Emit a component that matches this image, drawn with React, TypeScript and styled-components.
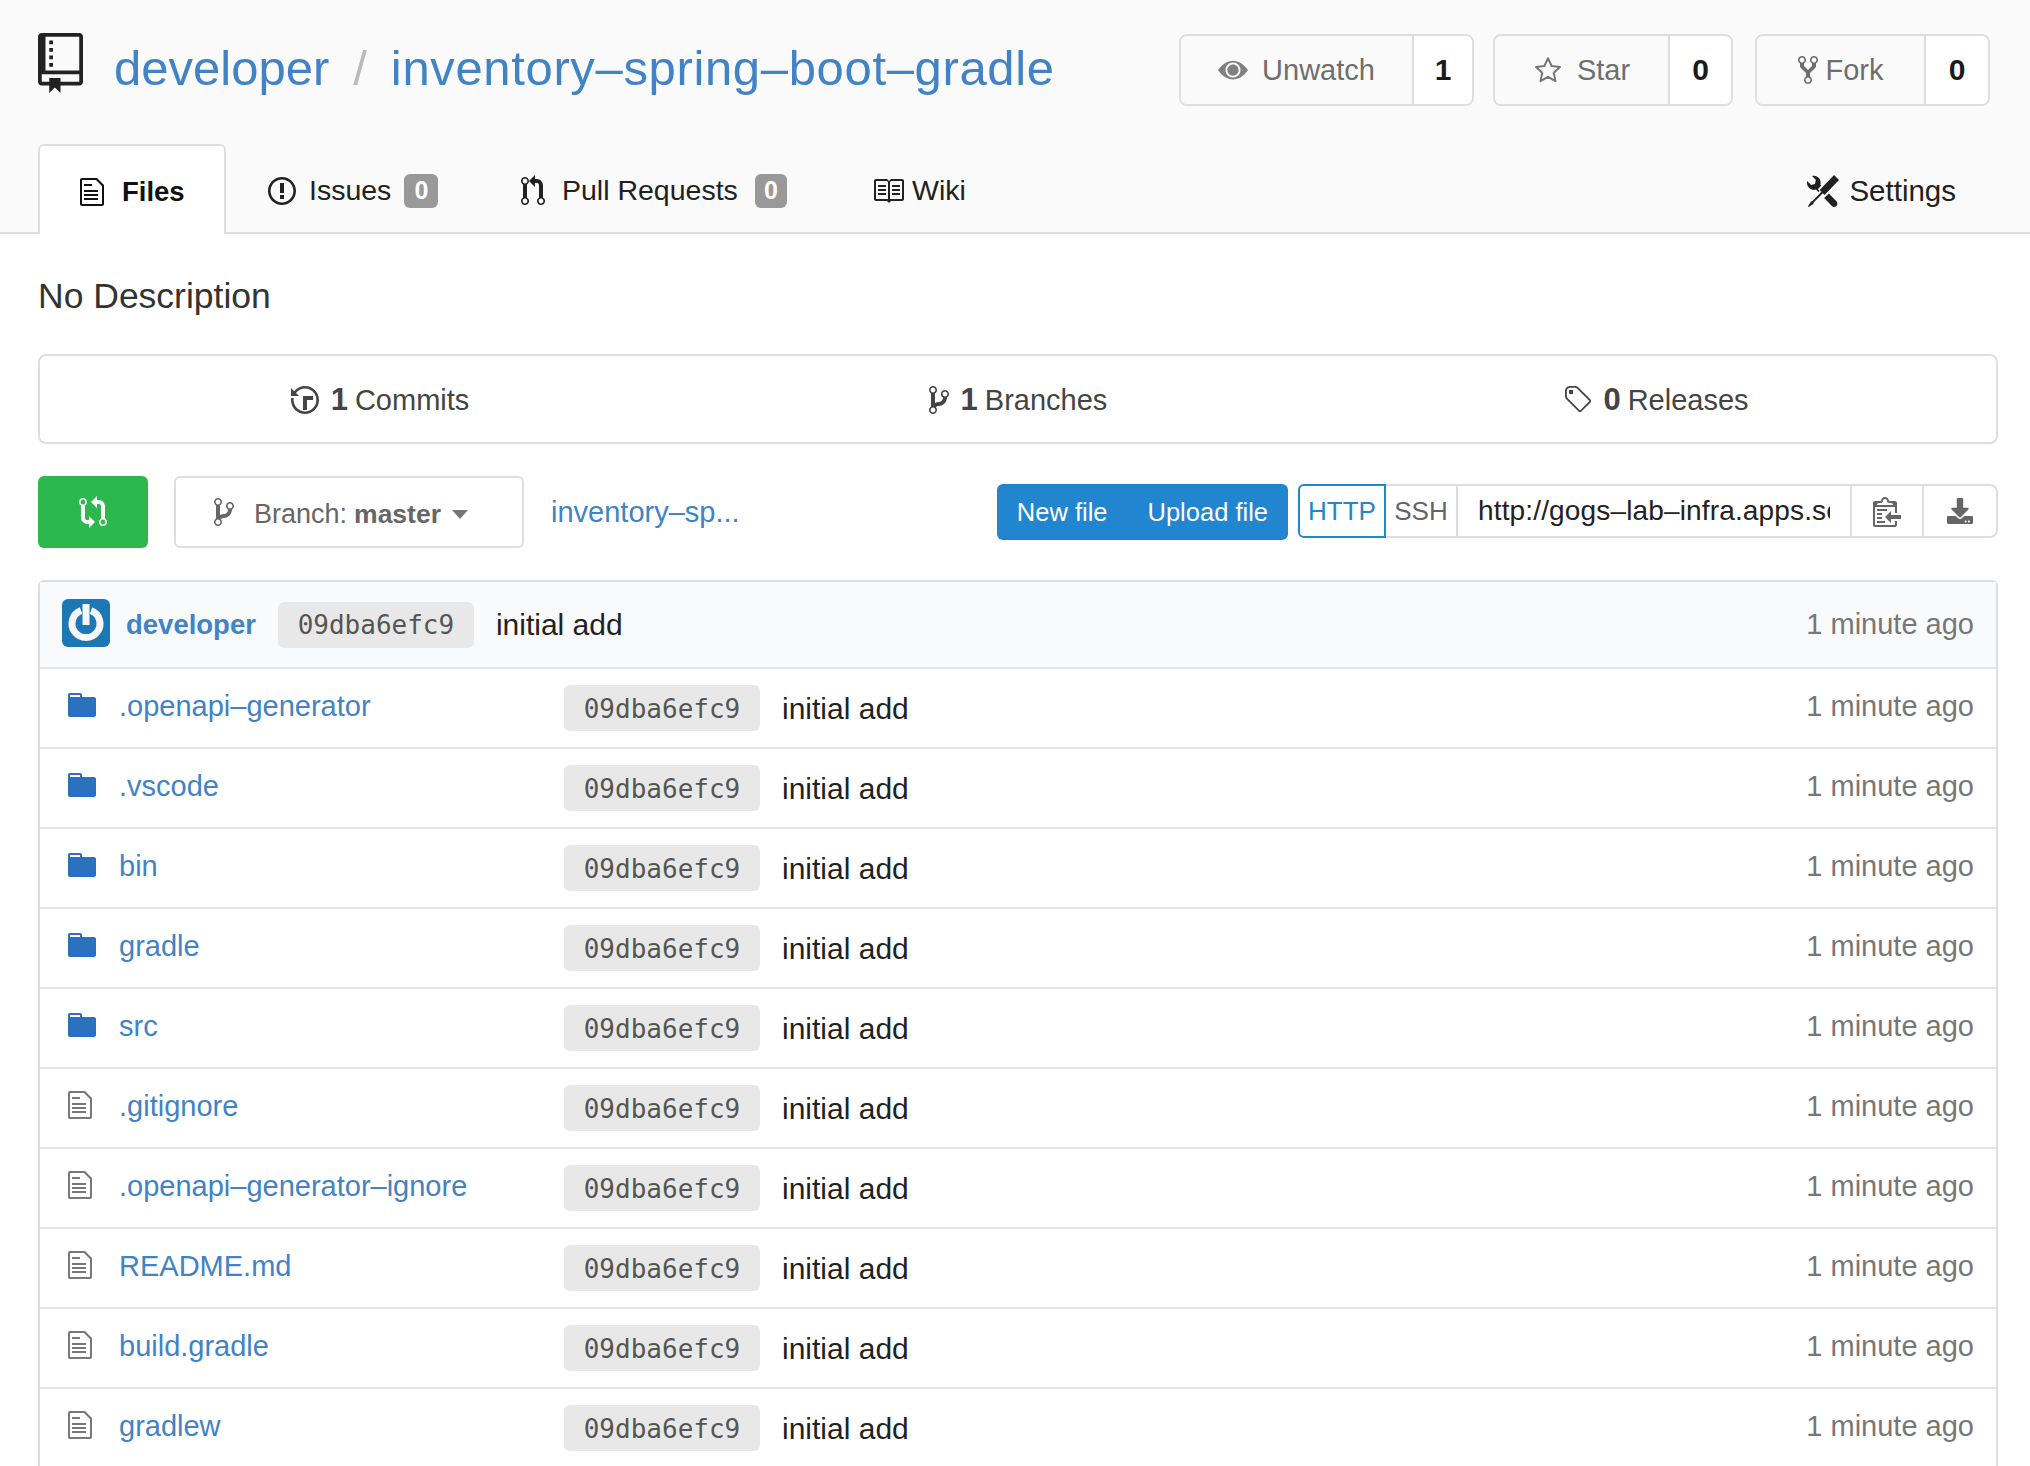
import React from 'react';
import styled, { createGlobalStyle } from 'styled-components';
import { FaDownload } from 'react-icons/fa';

const GlobalStyle = createGlobalStyle`
  html, body {
    margin: 0;
    height: 100%;
    overflow: hidden;
    background: #fff;
  }
  body {
    font-family: "Liberation Sans", Arial, sans-serif;
    font-size: 30px;
    color: rgba(0, 0, 0, 0.87);
  }
  a {
    color: #4183c4;
    text-decoration: none;
  }
`;

const ICONS: Record<string, { w: number; d: string }> = {
  repo: { w: 12, d: 'M4 9H3V8h1v1zm0-3H3v1h1V6zm0-2H3v1h1V4zm0-2H3v1h1V2zm8-1v12c0 .55-.45 1-1 1H6v2l-1.5-1.5L3 16v-2H1c-.55 0-1-.45-1-1V1c0-.55.45-1 1-1h10c.55 0 1 .45 1 1zm-1 10H1v2h2v-1h3v1h5v-2zm0-10H2v9h9V1z' },
  file: { w: 12, d: 'M6 5H2V4h4v1zM2 8h7V7H2v1zm0 2h7V9H2v1zm0 2h7v-1H2v1zm10-7.5V14c0 .55-.45 1-1 1H1c-.55 0-1-.45-1-1V2c0-.55.45-1 1-1h7.5L12 4.5zM11 5L8 2H1v12h10V5z' },
  dir: { w: 14, d: 'M13 4H7V3c0-.66-.31-1-1-1H1c-.55 0-1 .45-1 1v10c0 .55.45 1 1 1h12c.55 0 1-.45 1-1V5c0-.55-.45-1-1-1zM6 4H1V3h5v1z' },
  issue: { w: 14, d: 'M7 2.3c3.14 0 5.7 2.56 5.7 5.7s-2.56 5.7-5.7 5.7A5.71 5.71 0 0 1 1.3 8c0-3.14 2.56-5.7 5.7-5.7zM7 1C3.14 1 0 4.14 0 8s3.14 7 7 7 7-3.14 7-7-3.14-7-7-7zm1 3H6v5h2V4zm0 6H6v2h2v-2z' },
  pull: { w: 12, d: 'M11 11.28V5c-.03-.78-.34-1.47-.94-2.06C9.46 2.35 8.78 2.03 8 2H7V0L4 3l3 3V4h1c.27.02.48.11.69.31.21.2.3.42.31.69v6.28A1.993 1.993 0 0 0 10 15a1.993 1.993 0 0 0 1-3.72zm-1 2.92c-.66 0-1.2-.55-1.2-1.2 0-.65.55-1.2 1.2-1.2.65 0 1.2.55 1.2 1.2 0 .65-.55 1.2-1.2 1.2zM4 3c0-1.11-.89-2-2-2a1.993 1.993 0 0 0-1 3.72v6.56A1.993 1.993 0 0 0 2 15a1.993 1.993 0 0 0 1-3.72V4.72c.59-.34 1-.98 1-1.72zm-.8 10c0 .66-.55 1.2-1.2 1.2-.65 0-1.2-.55-1.2-1.2 0-.65.55-1.2 1.2-1.2.65 0 1.2.55 1.2 1.2zM2 4.2C1.34 4.2.8 3.65.8 3c0-.65.55-1.2 1.2-1.2.65 0 1.2.55 1.2 1.2 0 .65-.55 1.2-1.2 1.2z' },
  branch: { w: 10, d: 'M10 5c0-1.11-.89-2-2-2a1.993 1.993 0 0 0-1 3.72v.3c-.02.52-.23.98-.63 1.38-.4.4-.86.61-1.38.63-.83.02-1.48.16-2 .45V4.72a1.993 1.993 0 0 0-1-3.72C.88 1 0 1.89 0 3a2 2 0 0 0 1 1.72v6.56c-.59.35-1 .99-1 1.72 0 1.11.89 2 2 2 1.11 0 2-.89 2-2 0-.53-.2-1-.53-1.36.09-.06.48-.41.59-.47.25-.11.56-.17.94-.17 1.05-.05 1.95-.45 2.75-1.25S8.95 7.77 9 6.73h-.02C9.59 6.37 10 5.73 10 5zM2 1.8c.66 0 1.2.55 1.2 1.2 0 .65-.55 1.2-1.2 1.2C1.35 4.2.8 3.65.8 3c0-.65.55-1.2 1.2-1.2zm0 12.41c-.66 0-1.2-.55-1.2-1.2 0-.65.55-1.2 1.2-1.2.65 0 1.2.55 1.2 1.2 0 .65-.55 1.2-1.2 1.2zm6-8c-.66 0-1.2-.55-1.2-1.2 0-.65.55-1.2 1.2-1.2.65 0 1.2.55 1.2 1.2 0 .65-.55 1.2-1.2 1.2z' },
  fork: { w: 10, d: 'M8 1a1.993 1.993 0 0 0-1 3.72V6L5 8 3 6V4.72A1.993 1.993 0 0 0 2 1a1.993 1.993 0 0 0-1 3.72V6.5l3 3v1.78A1.993 1.993 0 0 0 5 15a1.993 1.993 0 0 0 1-3.72V9.5l3-3V4.72A1.993 1.993 0 0 0 8 1zM2 4.2C1.34 4.2.8 3.65.8 3c0-.65.55-1.2 1.2-1.2.65 0 1.2.55 1.2 1.2 0 .65-.55 1.2-1.2 1.2zm3 10c-.66 0-1.2-.55-1.2-1.2 0-.65.55-1.2 1.2-1.2.65 0 1.2.55 1.2 1.2 0 .65-.55 1.2-1.2 1.2zm3-10c-.66 0-1.2-.55-1.2-1.2 0-.65.55-1.2 1.2-1.2.65 0 1.2.55 1.2 1.2 0 .65-.55 1.2-1.2 1.2z' },
  eye: { w: 16, d: 'M8.06 3C3 3 0 8 0 8s3 5 8.06 5C13 13 16 8 16 8s-3-5-7.94-5zM8 12c-2.2 0-4-1.78-4-4 0-2.2 1.8-4 4-4 2.22 0 4 1.8 4 4 0 2.22-1.78 4-4 4zm3-4c0 1.66-1.34 3-3 3-1.66 0-3-1.34-3-3 0-1.66 1.34-3 3-3 1.66 0 3 1.34 3 3z' },
  tag: { w: 14, d: 'M7.73 1.73C7.26 1.26 6.62 1 5.96 1H3.5C2.13 1 1 2.13 1 3.5v2.47c0 .66.27 1.3.73 1.77l6.06 6.06c.39.39 1.02.39 1.41 0l4.59-4.59a.996.996 0 0 0 0-1.41L7.73 1.73zM2.38 7.09c-.31-.3-.47-.7-.47-1.13V3.5c0-.88.72-1.59 1.59-1.59h2.47c.42 0 .83.16 1.13.47l6.14 6.13-4.73 4.73-6.13-6.15zM3.01 3h2v2H3V3h.01z' },
  history: { w: 14, d: 'M8 13H6V6h5v2H8v5zM7 1C4.81 1 2.87 2.02 1.59 3.59L0 2v4h4L2.5 4.5C3.55 3.17 5.17 2.3 7 2.3c3.14 0 5.7 2.56 5.7 5.7s-2.56 5.7-5.7 5.7A5.71 5.71 0 0 1 1.3 8c0-.34.03-.67.09-1H.08C.03 7.33 0 7.66 0 8c0 3.86 3.14 7 7 7s7-3.14 7-7-3.14-7-7-7z' },
  book: { w: 16, d: 'M3 5h4v1H3V5zm0 3h4V7H3v1zm0 2h4V9H3v1zm11-5h-4v1h4V5zm0 2h-4v1h4V7zm0 2h-4v1h4V9zm2-6v9c0 .55-.45 1-1 1H9.5l-1 1-1-1H2c-.55 0-1-.45-1-1V3c0-.55.45-1 1-1h5.5l1 1 1-1H15c.55 0 1 .45 1 1zm-8 .5L7.5 3H2v9h6V3.5zm7-.5H9.5l-.5.5V12h6V3z' },
  tools: { w: 16, d: 'M4.48 7.27c.26.26 1.28 1.33 1.28 1.33l.56-.58-.88-.91 1.69-1.8s-.76-.74-.43-.45c.32-1.19.03-2.51-.87-3.44C4.93.5 3.66.2 2.52.51l1.93 2-.51 1.96-1.89.52-1.93-2C-.19 4.17.1 5.48 1 6.4c.94.98 2.29 1.26 3.48.87zm6.44 1.94l-2.33 2.3 3.84 3.98c.31.33.73.49 1.14.49.41 0 .82-.16 1.14-.49.63-.65.63-1.7 0-2.35l-3.79-3.93zM16 2.53L13.55 0 6.33 7.46l.88.91-4.31 4.46-.99.53-1.39 2.27.35.37 2.2-1.44.51-1.02L7.9 9.08l.88.91L16 2.53z' },
  compare: { w: 14, d: 'M5 12H4c-.27-.02-.48-.11-.69-.31-.21-.2-.3-.42-.31-.69V4.72A1.993 1.993 0 0 0 2 1a1.993 1.993 0 0 0-1 3.72V11c.03.78.34 1.47.94 2.06.6.59 1.28.91 2.06.94h1v2l3-3-3-3v2zM2 1.8c.66 0 1.2.55 1.2 1.2 0 .65-.55 1.2-1.2 1.2C1.35 4.2.8 3.65.8 3c0-.65.55-1.2 1.2-1.2zm11 9.48V5c-.03-.78-.34-1.47-.94-2.06-.6-.59-1.28-.91-2.06-.94H9V0L6 3l3 3V4h1c.27.02.48.11.69.31.21.2.3.42.31.69v6.28A1.993 1.993 0 0 0 12 15a1.993 1.993 0 0 0 1-3.72zm-1 2.92c-.66 0-1.2-.55-1.2-1.2 0-.65.55-1.2 1.2-1.2.65 0 1.2.55 1.2 1.2 0 .65-.55 1.2-1.2 1.2z' },
  clippy: { w: 14, d: 'M2 13h4v1H2v-1zm5-6H2v1h5V7zm2 3V8l-3 3 3 3v-2h5v-2H9zM4.5 9H2v1h2.5V9zM2 12h2.5v-1H2v1zm9 1h1v2c-.02.28-.11.52-.3.7-.19.18-.42.28-.7.3H1c-.55 0-1-.45-1-1V4c0-.55.45-1 1-1h3c0-1.11.89-2 2-2 1.11 0 2 .89 2 2h3c.55 0 1 .45 1 1v5h-1V6H1v9h10v-2zM2 5h8c0-.55-.45-1-1-1H8c-.55 0-1-.45-1-1s-.45-1-1-1-1 .45-1 1-.45 1-1 1H3c-.55 0-1 .45-1 1z' },
};

const Svg = styled.svg<{ $h: number; $color?: string }>`
  height: ${(p) => p.$h}px;
  width: auto;
  flex: none;
  display: block;
  fill: ${(p) => p.$color || 'currentColor'};
`;

const Octicon = ({ name, h, color }: { name: string; h: number; color?: string }) => (
  <Svg viewBox={`0 0 ${ICONS[name].w} 16`} $h={h} $color={color}>
    <path d={ICONS[name].d} />
  </Svg>
);

const StarOutline = () => (
  <Svg viewBox="0 0 24 24" $h={30} $color="none">
    <path d="M12 2.6l2.9 6.2 6.7.8-5 4.6 1.4 6.7-6-3.4-6 3.4 1.4-6.7-5-4.6 6.7-.8z" stroke="#767676" strokeWidth="1.6" strokeLinejoin="round" />
  </Svg>
);

const Page = styled.div`
  width: 2030px;
  height: 1466px;
  overflow: hidden;
`;

const Head = styled.header`
  background: #fafafa;
  border-bottom: 2px solid #dedede;
  height: 234px;
  box-sizing: border-box;
  padding: 34px 40px 0 38px;
  display: flex;
  flex-direction: column;
`;

const TitleRow = styled.div`
  display: flex;
  flex: none;
  align-items: flex-start;
  height: 110px;
`;

const Title = styled.h1`
  flex: 1;
  margin: -2px 0 0;
  display: flex;
  align-items: center;
  height: 72px;
  padding-left: 31px;
  font-size: 49px;
  font-weight: 400;
`;

const Slash = styled.span`
  color: #bbb;
  margin: 0 24px;
`;

const RepoName = styled.a`
  letter-spacing: 0.65px;
`;

const RepoIcon = styled.div`
  margin-top: -1px;
  color: #222;
`;

const Counter = styled.div<{ $ml: number }>`
  display: flex;
  height: 72px;
  box-sizing: border-box;
  border: 2px solid #dedede;
  border-radius: 8px;
  overflow: hidden;
  margin-left: ${(p) => p.$ml}px;
  font-size: 29px;
`;

const CounterLabel = styled.div<{ $w: number; $gap: number }>`
  width: ${(p) => p.$w}px;
  box-sizing: border-box;
  display: flex;
  align-items: center;
  justify-content: center;
  gap: ${(p) => p.$gap}px;
  background: #fafafa;
  color: #6e6e6e;
  border-right: 2px solid #dedede;
`;

const CounterValue = styled.div<{ $w: number }>`
  width: ${(p) => p.$w}px;
  display: flex;
  align-items: center;
  justify-content: center;
  background: #fff;
  font-weight: 700;
  font-size: 30px;
  color: #1b1b1b;
`;

const Tabs = styled.nav`
  display: flex;
  flex: none;
  height: 90px;
  align-items: stretch;
  font-size: 28.5px;
`;

const Tab = styled.div<{ $active?: boolean; $w?: number; $gap?: number; $pl?: number }>`
  display: flex;
  align-items: center;
  box-sizing: border-box;
  gap: ${(p) => p.$gap ?? 14}px;
  padding-top: 3px;
  padding-left: ${(p) => p.$pl ?? 0}px;
  width: ${(p) => (p.$w ? `${p.$w}px` : 'auto')};
  color: #212121;
  ${(p) =>
    p.$active &&
    `
    background: #fff;
    border: 2px solid #dedede;
    border-bottom: none;
    border-radius: 6px 6px 0 0;
    color: #111;
    font-weight: 700;
    font-size: 27.5px;
  `}
`;

const SettingsTab = styled(Tab)`
  margin-left: auto;
  margin-right: 34px;
  font-size: 29.5px;
`;

const Badge = styled.span<{ $w: number }>`
  background: #999;
  color: #fff;
  font-size: 25px;
  font-weight: 700;
  width: ${(p) => p.$w}px;
  height: 34px;
  border-radius: 6px;
  display: flex;
  align-items: center;
  justify-content: center;
`;

const Main = styled.main`
  padding: 0 32px 0 38px;
`;

const Description = styled.p`
  margin: 0;
  height: 120px;
  box-sizing: border-box;
  padding-top: 4px;
  display: flex;
  align-items: center;
  font-size: 35.5px;
  color: #333;
`;

const Stats = styled.div`
  height: 90px;
  box-sizing: border-box;
  border: 2px solid #dedede;
  border-radius: 8px;
  display: grid;
  grid-template-columns: 680px 596px 1fr;
  align-items: center;
  padding-top: 2px;
  font-size: 29px;
`;

const Stat = styled.div`
  display: flex;
  align-items: center;
  justify-content: center;
  gap: 12px;
  color: #444;
  b {
    font-size: 31px;
    margin-right: 7px;
  }
`;

const Toolbar = styled.div`
  display: flex;
  align-items: center;
  height: 72px;
  margin: 32px 0;
`;

const GreenButton = styled.div`
  width: 110px;
  height: 72px;
  background: #2db84d;
  border-radius: 6px;
  color: #fff;
  display: flex;
  align-items: center;
  justify-content: center;
`;

const BranchButton = styled.div`
  width: 350px;
  height: 72px;
  box-sizing: border-box;
  margin-left: 26px;
  padding-left: 38px;
  border: 2px solid #dedede;
  border-radius: 6px;
  display: flex;
  align-items: center;
  color: #666;
  font-size: 27px;
  b {
    margin-left: 7px;
    font-size: 26.5px;
  }
`;

const BranchText = styled.span`
  margin: 4px 0 0 20px;
`;

const Caret = styled.i`
  width: 0;
  height: 0;
  margin: 4px 0 0 11px;
  border-left: 8px solid transparent;
  border-right: 8px solid transparent;
  border-top: 9px solid #767676;
`;

const PathLink = styled.a`
  margin-left: 27px;
  flex: 1;
  font-size: 29px;
`;

const BlueGroup = styled.div`
  display: flex;
  align-items: center;
  height: 56px;
  background: #2185d0;
  border-radius: 6px;
  color: #fff;
  font-size: 25.5px;
  padding: 0 20px;
  gap: 40px;
  white-space: nowrap;
`;

const CloneGroup = styled.div`
  display: flex;
  height: 54px;
  margin: 0 0 2px 10px;
  font-size: 26px;
`;

const Proto = styled.div<{ $active?: boolean; $w: number }>`
  width: ${(p) => p.$w}px;
  box-sizing: border-box;
  display: flex;
  align-items: center;
  justify-content: center;
  border: 2px solid ${(p) => (p.$active ? '#2185d0' : '#dedede')};
  border-left: ${(p) => (p.$active ? '2px solid #2185d0' : 'none')};
  color: ${(p) => (p.$active ? '#2185d0' : '#666')};
  border-radius: ${(p) => (p.$active ? '6px 0 0 6px' : '0')};
`;

const UrlBox = styled.div`
  width: 394px;
  box-sizing: border-box;
  padding: 0 20px;
  display: flex;
  align-items: center;
  border: 2px solid #dedede;
  border-left: none;
  overflow: hidden;
  white-space: nowrap;
  color: #222;
  font-size: 28px;
`;

const UrlText = styled.span`
  display: block;
  overflow: hidden;
  letter-spacing: 0.15px;
`;

const IconBtn = styled.div<{ $last?: boolean; $w: number }>`
  width: ${(p) => p.$w}px;
  box-sizing: border-box;
  display: flex;
  align-items: center;
  justify-content: center;
  border: 2px solid #dedede;
  border-left: none;
  border-radius: ${(p) => (p.$last ? '0 8px 8px 0' : '0')};
  color: #666;
  font-size: 26px;
`;

const Table = styled.div`
  border: 2px solid #dedede;
  border-bottom: none;
  border-radius: 6px 6px 0 0;
`;

const CommitHead = styled.div`
  height: 85px;
  box-sizing: border-box;
  background: #f9fafb;
  display: flex;
  align-items: center;
  padding: 0 22px;
`;

const Avatar = styled.div`
  width: 48px;
  height: 48px;
  margin-top: -4px;
  border-radius: 6px;
  background: #1b78b4;
  flex: none;
`;

const Author = styled.a`
  font-weight: 700;
  font-size: 27.5px;
  margin: 0 22px 0 16px;
`;

const Sha = styled.span`
  width: 196px;
  height: 46px;
  background: #e8e8e8;
  border-radius: 6px;
  display: flex;
  align-items: center;
  justify-content: center;
  font-family: "DejaVu Sans Mono", "Liberation Mono", monospace;
  font-size: 26px;
  color: #555;
  flex: none;
`;

const Message = styled.span`
  margin-left: 22px;
  color: #222;
  flex: 1;
`;

const Age = styled.span`
  color: #777;
  font-size: 29px;
  white-space: nowrap;
`;

const Row = styled.div`
  height: 80px;
  box-sizing: border-box;
  border-top: 2px solid #e4e4e4;
  display: flex;
  align-items: center;
  padding: 0 22px 0 28px;
  ${Age} {
    margin-top: -3px;
  }
  ${Message} {
    margin-top: 2px;
  }
  ${Sha} {
    box-sizing: border-box;
    padding-top: 2px;
  }
`;

const IconCell = styled.div`
  width: 51px;
  flex: none;
  margin-top: -7px;
`;

const Name = styled.a`
  width: 445px;
  flex: none;
  margin-top: -4px;
  font-size: 29px;
`;

const entries: { name: string; dir?: boolean }[] = [
  { name: '.openapi–generator', dir: true },
  { name: '.vscode', dir: true },
  { name: 'bin', dir: true },
  { name: 'gradle', dir: true },
  { name: 'src', dir: true },
  { name: '.gitignore' },
  { name: '.openapi–generator–ignore' },
  { name: 'README.md' },
  { name: 'build.gradle' },
  { name: 'gradlew' },
];

const App: React.FC = () => {
  return (
    <Page>
      <GlobalStyle />
      <Head>
        <TitleRow>
          <RepoIcon>
            <Octicon name="repo" h={60} />
          </RepoIcon>
          <Title>
            <a href="#">developer</a>
            <Slash>/</Slash>
            <RepoName href="#">inventory–spring–boot–gradle</RepoName>
          </Title>
          <Counter $ml={20}>
            <CounterLabel $w={233} $gap={14}>
              <Octicon name="eye" h={30} color="#808080" />
              Unwatch
            </CounterLabel>
            <CounterValue $w={58}>1</CounterValue>
          </Counter>
          <Counter $ml={19}>
            <CounterLabel $w={175} $gap={14}>
              <StarOutline />
              Star
            </CounterLabel>
            <CounterValue $w={61}>0</CounterValue>
          </Counter>
          <Counter $ml={22}>
            <CounterLabel $w={169} $gap={8}>
              <Octicon name="fork" h={32} />
              Fork
            </CounterLabel>
            <CounterValue $w={62}>0</CounterValue>
          </Counter>
        </TitleRow>
        <Tabs>
          <Tab $active $w={188} $pl={40} $gap={18}>
            <Octicon name="file" h={32} />
            Files
          </Tab>
          <Tab $w={255} $pl={42} $gap={13}>
            <Octicon name="issue" h={32} />
            Issues
            <Badge $w={34}>0</Badge>
          </Tab>
          <Tab $w={391} $pl={40} $gap={17}>
            <Octicon name="pull" h={32} />
            Pull Requests
            <Badge $w={32}>0</Badge>
          </Tab>
          <Tab $gap={8}>
            <Octicon name="book" h={32} />
            Wiki
          </Tab>
          <SettingsTab $gap={10}>
            <Octicon name="tools" h={32} />
            Settings
          </SettingsTab>
        </Tabs>
      </Head>
      <Main>
        <Description>No Description</Description>
        <Stats>
          <Stat>
            <Octicon name="history" h={32} />
            <span>
              <b>1</b>Commits
            </span>
          </Stat>
          <Stat>
            <Octicon name="branch" h={32} />
            <span>
              <b>1</b>Branches
            </span>
          </Stat>
          <Stat>
            <Octicon name="tag" h={32} />
            <span>
              <b>0</b>Releases
            </span>
          </Stat>
        </Stats>
        <Toolbar>
          <GreenButton>
            <Octicon name="compare" h={32} />
          </GreenButton>
          <BranchButton>
            <Octicon name="branch" h={32} />
            <BranchText>
              Branch:<b>master</b>
            </BranchText>
            <Caret />
          </BranchButton>
          <PathLink href="#">inventory–sp...</PathLink>
          <BlueGroup>
            <span>New file</span>
            <span>Upload file</span>
          </BlueGroup>
          <CloneGroup>
            <Proto $active $w={88}>HTTP</Proto>
            <Proto $w={72}>SSH</Proto>
            <UrlBox>
              <UrlText>http://gogs–lab–infra.apps.se</UrlText>
            </UrlBox>
            <IconBtn $w={72}>
              <Octicon name="clippy" h={32} />
            </IconBtn>
            <IconBtn $w={74} $last>
              <FaDownload />
            </IconBtn>
          </CloneGroup>
        </Toolbar>
        <Table>
          <CommitHead>
            <Avatar>
              <svg viewBox="0 0 48 48" width="48" height="48" fill="none" stroke="#f4f6f8" strokeWidth="7">
                <path d="M29 11.5a14 14 0 1 1-10 0" />
                <path d="M24 5v21" />
              </svg>
            </Avatar>
            <Author href="#">developer</Author>
            <Sha>09dba6efc9</Sha>
            <Message>initial add</Message>
            <Age>1 minute ago</Age>
          </CommitHead>
          {entries.map((entry) => (
            <Row key={entry.name}>
              <IconCell>
                {entry.dir ? (
                  <Octicon name="dir" h={32} color="#2a72c0" />
                ) : (
                  <Octicon name="file" h={32} color="#777" />
                )}
              </IconCell>
              <Name href="#">{entry.name}</Name>
              <Sha>09dba6efc9</Sha>
              <Message>initial add</Message>
              <Age>1 minute ago</Age>
            </Row>
          ))}
        </Table>
      </Main>
    </Page>
  );
};

export default App;
